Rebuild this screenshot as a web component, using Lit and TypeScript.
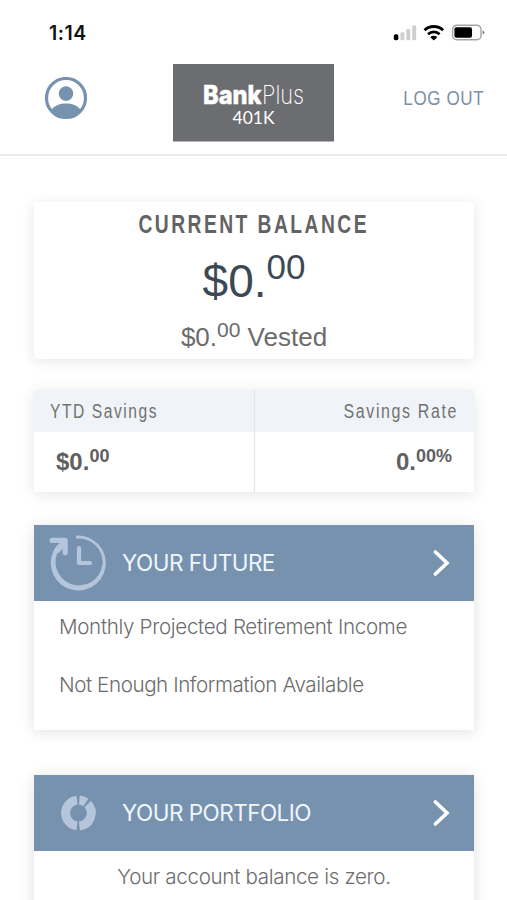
import { LitElement, html, css, svg } from "lit";
import { customElement, property } from "lit/decorators.js";

@customElement("status-bar")
class StatusBar extends LitElement {
  static styles = css`
    :host { display: flex; justify-content: space-between; align-items: center; height: 64px; padding: 1px 22px 0 49px; box-sizing: border-box; }
    .time { font: 600 19.5px/24px Inter, sans-serif; color: #111; letter-spacing: 0.5px; }
    svg { display: block; }
  `;
  render() {
    return html`
      <span class="time">1:14</span>
      <svg width="92" height="20" viewBox="0 0 92 20">
        <rect x="0.8" y="11.3" width="4.6" height="6" rx="1.8" fill="#000" />
        <rect x="7.4" y="9.3" width="4" height="8" rx="1" fill="#cfcfcf" />
        <rect x="13.3" y="6" width="4" height="11.3" rx="1" fill="#cfcfcf" />
        <rect x="19.2" y="2.5" width="4" height="14.8" rx="1" fill="#cfcfcf" />
        <g fill="none" stroke="#000" stroke-width="2.8">
          <path d="M31.5 7.2A13.6 13.6 0 0 1 50.1 7.2" />
          <path d="M35 11.2A8.4 8.4 0 0 1 46.6 11.2" />
        </g>
        <path d="M37.3 14.2a5 5 0 0 1 7 0L40.8 17.6z" fill="#000" />
        <rect x="59.6" y="2.2" width="28.4" height="14.6" rx="4.2" fill="#fff" stroke="#a3a3a3" stroke-width="1.4" />
        <rect x="61.4" y="4.2" width="17.6" height="10.6" rx="2" fill="#000" />
        <path d="M89.6 7.5q1.8 .6 1.8 2t-1.8 2z" fill="#777" />
      </svg>
    `;
  }
}

@customElement("top-header")
class TopHeader extends LitElement {
  static styles = css`
    :host { display: grid; grid-template-columns: 128px 1fr 172px; height: 92px; box-sizing: border-box; border-bottom: 2px solid #ebebeb; padding-left: 45px; }
    svg { display: block; }
    .user { margin-top: 13px; }
    .logout { justify-self: end; margin: 21px 23px 0 0; font: 400 20px/26px "Liberation Sans", Arial, sans-serif; color: #7b8fa8; white-space: nowrap; transform: scaleX(0.85); transform-origin: right; letter-spacing: 0.75px; }
    .bold { font: 800 26px Inter, sans-serif; }
    .light { font: 200 26px Inter, sans-serif; }
    .plan { font: 400 18px Lato, sans-serif; }
  `;
  render() {
    return html`
      <svg class="user" width="43" height="43" viewBox="0 0 43 43" fill="#7792ae">
        <circle cx="21" cy="21" r="19.5" fill="none" stroke="#7792ae" stroke-width="3.2" />
        <circle cx="21" cy="16.6" r="7.3" />
        <path d="M6.6 32.6C10 28.2 15 26.5 21 26.5s11 1.7 14.4 6.1L31 39L21 41L11 39z" />
      </svg>
      <svg width="161" height="78" viewBox="0 0 161 78">
        <rect width="161" height="77.5" fill="#6c6d71" />
        <text class="bold" x="30" y="40" textLength="58.5" lengthAdjust="spacingAndGlyphs" fill="#fff" stroke="#fff" stroke-width="0.5">Bank</text>
        <text class="light" x="89" y="40" textLength="42" lengthAdjust="spacingAndGlyphs" fill="#fff">Plus</text>
        <text class="plan" x="59.5" y="60" textLength="42" lengthAdjust="spacingAndGlyphs" fill="#fff">401K</text>
      </svg>
      <span class="logout">LOG OUT</span>
    `;
  }
}

@customElement("feature-card")
class FeatureCard extends LitElement {
  @property() heading = "";
  @property() icon = "clock";
  static styles = css`
    :host { display: block; background: #fff; box-shadow: 0 2px 14px rgba(0, 0, 0, 0.12); }
    .bar { display: grid; grid-template-columns: 88px 1fr 50px; align-items: center; height: 76px; background: #7792ae; }
    .icon { justify-self: center; display: block; }
    .title { font: 400 22.5px/28px Inter, sans-serif; color: #f0f6fc; letter-spacing: -0.52px; white-space: nowrap; }
  `;
  render() {
    const glyph = this.icon === "clock"
      ? svg`
        <path d="M27 2.6A27.5 27.5 0 1 1 8 12.6L11.1 15A23.5 23.5 0 1 0 27 5.6z" fill="#b5c6dc" />
        <path d="M3.2 7.4H16.2V19.6" fill="none" stroke="#b5c6dc" stroke-width="5.2" stroke-linejoin="round" stroke-linecap="round" />
        <path d="M16 8.5L7 18.5" fill="none" stroke="#b5c6dc" stroke-width="6" />
        <path d="M30 15.2V30H41" fill="none" stroke="#b5c6dc" stroke-width="4.2" stroke-linejoin="round" stroke-linecap="round" />`
      : svg`
        <g fill="none" stroke="#b5c6dc" stroke-width="9">
          <path d="M28 17.1A13 13 0 0 0 28 42.9" />
          <path d="M30.4 17.1A13 13 0 0 1 36.8 19.5" />
          <path d="M38.7 21.1A13 13 0 0 1 30.4 42.9" />
        </g>`;
    return html`
      <div class="bar">
        <svg class="icon" width="58" height="60" viewBox="0 0 58 60">${glyph}</svg>
        <span class="title">${this.heading}</span>
        <svg width="28" height="30" viewBox="0 0 28 30">
          <path d="M11.4 4L23 15L11.4 26" fill="none" stroke="#fff" stroke-width="3.6" stroke-linecap="round" />
        </svg>
      </div>
      <slot></slot>
    `;
  }
}

@customElement("app-root")
class AppRoot extends LitElement {
  static styles = css`
    :host { display: block; height: 900px; overflow: hidden; background: #fff; font-family: "Liberation Sans", Arial, sans-serif; color: #666; }
    main { display: flex; flex-direction: column; width: 440px; margin: 46px 0 0 34px; }
    .card { background: #fff; box-shadow: 0 2px 14px rgba(0, 0, 0, 0.1); }
    .cents { line-height: 0; vertical-align: baseline; position: relative; }
    .balance { height: 157px; border-radius: 3px; display: flex; flex-direction: column; align-items: center; white-space: nowrap; }
    .label { margin-top: 8px; font: 700 25px/28px "Liberation Sans", sans-serif; letter-spacing: 3.2px; transform: scaleX(0.77); color: #636363; }
    .amount { font: 400 46px/50px "Liberation Sans", sans-serif; margin-top: 18px; color: #3c4854; }
    .amount .cents { font-size: 35px; top: -18px; }
    .vested { font: 400 26px/30px "Liberation Sans", sans-serif; margin-top: 16px; color: #6b6b6b; }
    .vested .cents { font-size: 21px; top: -9px; }
    .stats { display: grid; grid-template-columns: 220px 1fr; height: 102px; margin-top: 31px; }
    .stat + .stat { border-left: 1px solid #e2e5e8; text-align: right; }
    .name { height: 42px; background: #f0f4f8; padding: 0 16px; font: 400 20px/43px "Liberation Sans", sans-serif; letter-spacing: 2px; color: #727272; white-space: nowrap; }
    .name span { display: inline-block; transform: scaleX(0.78); transform-origin: left; }
    .stat + .stat .name span { transform: scaleX(0.8); transform-origin: right; }
    .value { padding: 17px 22px 0; font: 700 24px/26px "Liberation Sans", sans-serif; color: #606060; }
    .value .cents { font-size: 18px; top: -8px; }
    .future { height: 205px; margin-top: 33px; }
    .portfolio { height: 205px; margin-top: 45px; }
    .line { margin: 0; font: 300 20.6px/28px Inter, sans-serif; letter-spacing: -0.33px; color: #6c6c6c; white-space: nowrap; }
    .future .line { padding-left: 25px; }
    .future .income { padding-top: 12px; }
    .future .empty { padding-top: 30px; letter-spacing: -0.42px; }
    .zero { padding-top: 12px; text-align: center; }
  `;
  render() {
    return html`
      <status-bar></status-bar>
      <top-header></top-header>
      <main>
        <section class="card balance">
          <div class="label">CURRENT BALANCE</div>
          <div class="amount">$0.<span class="cents">00</span></div>
          <div class="vested">$0.<span class="cents">00</span> Vested</div>
        </section>
        <section class="card stats">
          <div class="stat">
            <div class="name"><span>YTD Savings</span></div>
            <div class="value">$0.<span class="cents">00</span></div>
          </div>
          <div class="stat">
            <div class="name"><span>Savings Rate</span></div>
            <div class="value">0.<span class="cents">00%</span></div>
          </div>
        </section>
        <feature-card class="future" heading="YOUR FUTURE" icon="clock">
          <p class="line income">Monthly Projected Retirement Income</p>
          <p class="line empty">Not Enough Information Available</p>
        </feature-card>
        <feature-card class="portfolio" heading="YOUR PORTFOLIO" icon="donut">
          <p class="line zero">Your account balance is zero.</p>
        </feature-card>
      </main>
    `;
  }
}
